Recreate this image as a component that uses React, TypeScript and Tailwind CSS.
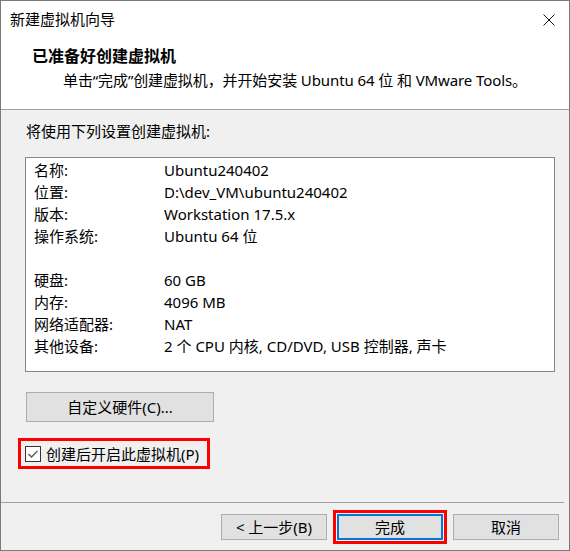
import React from "react";

const FONT = { fontFamily: '"Noto Sans", "Noto Sans CJK SC", sans-serif' };

const rows: [string, string][] = [
  ["名称:", "Ubuntu240402"],
  ["位置:", "D:\\dev_VM\\ubuntu240402"],
  ["版本:", "Workstation 17.5.x"],
  ["操作系统:", "Ubuntu 64 位"],
  ["", ""],
  ["硬盘:", "60 GB"],
  ["内存:", "4096 MB"],
  ["网络适配器:", "NAT"],
  ["其他设备:", "2 个 CPU 内核, CD/DVD, USB 控制器, 声卡"],
];

function WinButton({ children, focused }: { children: React.ReactNode; focused?: boolean }) {
  return (
    <div
      className={
        "w-[106px] h-[26px] flex items-center justify-center bg-[#e1e1e1] text-[15px] leading-[20px] text-black " +
        (focused ? "border-2 border-[#0078d7]" : "border border-[#adadad]")
      }
    >
      {children}
    </div>
  );
}

export default function App() {
  return (
    <div
      className="w-[570px] h-[551px] border border-[#7a7a7a] bg-[#f0f0f0] flex flex-col text-black overflow-hidden"
      style={FONT}
    >
      {/* title bar + header */}
      <div className="bg-white border-b border-[#a0a0a0]">
        <div className="h-[36px] flex items-center justify-between pl-[9px] pr-[14px]">
          <span className="text-[15px] leading-[20px]">新建虚拟机向导</span>
          <svg width="12" height="12" viewBox="0 0 12 12" className="mt-[1px]">
            <path d="M0.5 0.5 L11.5 11.5 M11.5 0.5 L0.5 11.5" stroke="#111" strokeWidth="1" />
          </svg>
        </div>
        <div className="h-[72px] pt-[9px] pl-[31px]">
          <div className="text-[16px] leading-[20px] font-bold">已准备好创建虚拟机</div>
          <div className="mt-[4px] pl-[31px] text-[15px] leading-[20px] tracking-[-0.1px]">
            单击“完成”创建虚拟机，并开始安装 Ubuntu 64 位 和 VMware Tools。
          </div>
        </div>
      </div>

      {/* body */}
      <div className="flex-1 flex flex-col">
        <div className="pt-[11px] pl-[25px] text-[15px] leading-[20px]">将使用下列设置创建虚拟机:</div>

        <div className="mt-[16px] ml-[24px] w-[530px] h-[215px] bg-white border border-[#828790] pt-[1px]">
          {rows.map(([k, v], i) => (
            <div key={i} className="h-[22px] flex items-center text-[15px] leading-[20px]">
              <span className="w-[138px] pl-[8px] shrink-0">{k}</span>
              <span>{v}</span>
            </div>
          ))}
        </div>

        <div className="mt-[20px] ml-[25px] w-[188px] h-[30px] flex items-center justify-center bg-[#e1e1e1] border border-[#adadad] text-[15px] leading-[20px]">
          自定义硬件(C)...
        </div>

        <div className="mt-[16px] ml-[17px] w-[192px] h-[31px] border-[3px] border-[#ff0000] flex items-center pl-[4px]">
          <div className="w-[16px] h-[16px] border border-[#333] bg-white flex items-center justify-center">
            <svg width="12" height="12" viewBox="0 0 12 12">
              <path d="M1.5 6 L4.5 9 L10.5 3" fill="none" stroke="#555" strokeWidth="1.3" />
            </svg>
          </div>
          <span className="ml-[5px] text-[15px] leading-[20px]">创建后开启此虚拟机(P)</span>
        </div>

        <div className="mt-[33px] mr-[5px] h-px bg-[#a0a0a0]" />

        <div className="mt-[11px] flex justify-end gap-[10px] pr-[10px]">
          <WinButton>&lt; 上一步(B)</WinButton>
          <div className="-m-[4px] border-[3px] border-[#ff0000] p-px">
            <WinButton focused>完成</WinButton>
          </div>
          <WinButton>取消</WinButton>
        </div>
      </div>
    </div>
  );
}
